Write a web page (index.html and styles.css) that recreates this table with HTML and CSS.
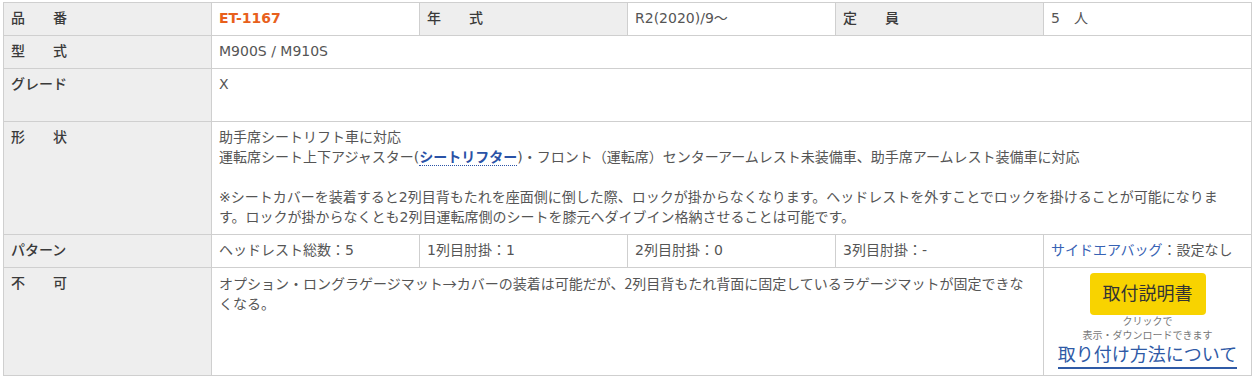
FILE: index.html
```html
<!DOCTYPE html>
<html lang="ja">
<head>
<meta charset="utf-8">
<title>ET-1167</title>
<link rel="stylesheet" href="styles.css">
</head>
<body>
<table class="spec">
  <colgroup><col><col><col><col><col><col></colgroup>
  <tr>
    <th>品　　番</th>
    <td><span class="code">ET-1167</span></td>
    <th>年　　式</th>
    <td>R2(2020)/9～</td>
    <th>定　　員</th>
    <td>5　人</td>
  </tr>
  <tr>
    <th>型　　式</th>
    <td colspan="5">M900S / M910S</td>
  </tr>
  <tr>
    <th>グレード</th>
    <td colspan="5">X<br>&nbsp;</td>
  </tr>
  <tr>
    <th>形　　状</th>
    <td colspan="5">助手席シートリフト車に対応<br>運転席シート上下アジャスター(<a class="term" href="#">シートリフター</a>)・フロント（運転席）センターアームレスト未装備車、助手席アームレスト装備車に対応<br><br>※シートカバーを装着すると2列目背もたれを座面側に倒した際、ロックが掛からなくなります。ヘッドレストを外すことでロックを掛けることが可能になります。ロックが掛からなくとも2列目運転席側のシートを膝元へダイブイン格納させることは可能です。</td>
  </tr>
  <tr>
    <th>パターン</th>
    <td>ヘッドレスト総数：5</td>
    <td>1列目肘掛：1</td>
    <td>2列目肘掛：0</td>
    <td>3列目肘掛：-</td>
    <td><a class="airbag" href="#">サイドエアバッグ</a>：設定なし</td>
  </tr>
  <tr>
    <th>不　　可</th>
    <td colspan="4" class="cjk-text">オプション・ロングラゲージマット→カバーの装着は可能だが、2列目背もたれ背面に固定しているラゲージマットが固定できなくなる。</td>
    <td class="manual">
      <a class="manual-btn" href="#">取付説明書</a>
      <p class="note">クリックで<br>表示・ダウンロードできます</p>
      <a class="howto" href="#">取り付け方法について</a>
    </td>
  </tr>
</table>
</body>
</html>
```
FILE: styles.css
```css
html, body {
  margin: 0;
  padding: 0;
  background: #fff;
}
body {
  font-family: "DejaVu Sans", "Noto Sans CJK JP", sans-serif;
  font-size: 14px;
  line-height: 20px;
  color: #555;
}
.spec {
  margin: 2px 0 0 3px;
  width: 1249px;
  table-layout: fixed;
  border-collapse: collapse;
}
.spec th,
.spec td {
  border: 1px solid #cfcfcf;
  padding: 5px 7px 7px;
  vertical-align: top;
  text-align: left;
}
.spec th {
  background: #eeeeee;
  color: #3a3a3a;
  font-weight: 500;
}
.spec td.cjk-text {
  font-family: "Noto Sans CJK JP", "DejaVu Sans", sans-serif;
}
.code {
  color: #e8601c;
  font-weight: bold;
}
.term {
  color: #2a52a6;
  font-weight: bold;
  text-decoration: none;
  border-bottom: 1px dotted #2a52a6;
}
.airbag {
  color: #3762b4;
  text-decoration: none;
}
.spec td.manual {
  text-align: center;
  padding: 5px 7px 6px;
}
.manual-btn {
  display: inline-block;
  background: #f8d300;
  color: #333;
  font-size: 18px;
  line-height: 42px;
  padding: 0 13px;
  border-radius: 4px;
  text-decoration: none;
}
.note {
  margin: 0;
  font-size: 10px;
  line-height: 14px;
  color: #777;
}
.howto {
  display: inline-block;
  font-size: 18px;
  line-height: 24px;
  color: #2f5aa6;
  text-decoration: none;
  border-bottom: 2px solid #2f5aa6;
}
```
